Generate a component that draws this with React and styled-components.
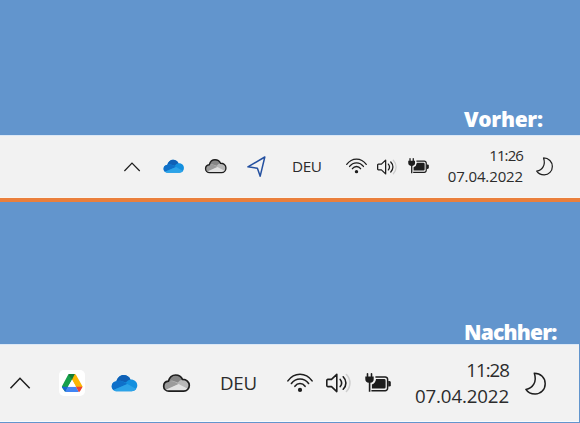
import React from 'react'
import styled, { createGlobalStyle } from 'styled-components'

const Palette = {
  blue: '#6295cd',
  bar: '#f2f2f2',
  orange: '#ea7f3c',
  ink: '#1d1d1d',
  text: '#2c2c2c',
}

const GlobalStyle = createGlobalStyle`
  body {
    margin: 0;
    background: ${Palette.blue};
    overflow: hidden;
  }
`
const Wrapper = styled.div`
  display: flex;
  flex-direction: column;
  width: 580px;
  height: 423px;
  background: ${Palette.blue};
`
const Backdrop = styled.div`
  box-sizing: border-box;
  display: flex;
  align-items: flex-end;
  height: ${props => props.$height}px;
  padding-left: 464px;
`
const Heading = styled.div`
  font-family: 'Open Sans', 'Noto Sans', sans-serif;
  font-size: 21px;
  font-weight: 800;
  line-height: 26px;
  margin-bottom: ${props => props.$bottom}px;
  letter-spacing: ${props => props.$spacing}px;
  color: #fff;
  white-space: nowrap;
`
const Taskbar = styled.div`
  box-sizing: border-box;
  display: flex;
  align-items: center;
  width: ${props => props.$large ? 579 : 580}px;
  height: ${props => props.$large ? 78 : 63}px;
  border-top: 1px solid #dce8f6;
  border-bottom: 1px solid ${props => props.$large ? '#f8fafd' : '#faf5ee'};
  background: ${Palette.bar};
`
const Divider = styled.div`
  height: 4px;
  background: ${Palette.orange};
`
const Item = styled.div`
  display: flex;
  flex-shrink: 0;
  width: ${props => props.$width}px;
  margin-left: ${props => props.$gap}px;
`
const Svg = styled.svg`
  display: block;
  width: 100%;
  overflow: visible;
`
const Language = styled.div`
  flex-shrink: 0;
  width: ${props => props.$large ? 37 : 30}px;
  margin-left: ${props => props.$gap}px;
  font-family: 'Open Sans', 'Noto Sans', sans-serif;
  font-size: ${props => props.$large ? 18.7 : 15.3}px;
  line-height: ${props => props.$large ? 26 : 21}px;
  letter-spacing: ${props => props.$large ? -0.2 : -0.4}px;
  color: ${Palette.text};
`
const Clock = styled.div`
  display: flex;
  flex-direction: column;
  align-items: flex-end;
  flex-shrink: 0;
  width: ${props => props.$large ? 95 : 76}px;
  margin-left: ${props => props.$gap}px;
  padding-bottom: ${props => props.$large ? 0 : 2}px;
  font-family: 'Open Sans', 'Noto Sans', sans-serif;
  font-size: ${props => props.$large ? 18.7 : 15}px;
  line-height: ${props => props.$large ? 26 : 21}px;
  color: ${Palette.text};
`
const Time = styled.div`
  letter-spacing: ${props => props.$large ? -1 : -0.9}px;
`
const DateText = styled.div`
  letter-spacing: -0.12px;
`

const ChevronIcon = () => (
  <Svg viewBox="0 0 20 12" fill="none" stroke={Palette.ink} strokeWidth="1.5">
    <path d="M.5 11.3 10 1.3 19.7 11.3" />
  </Svg>
)

const DriveIcon = () => (
  <Svg viewBox="0 0 26 26">
    <rect width="26" height="26" rx="5" fill="#fff" />
    <path d="M10.4 4h5.4l-2.8 6-3.9 6.4L6.2 22 3.1 17.4q-.4-.8 0-1.5L9 5q.5-1 1.4-1z" fill="#16a04b" />
    <path d="M10.4 4h5.2q1 0 1.5.9l6.2 11q.3.5.2 1H17l-4-7.1z" fill="#fbb604" />
    <path d="M10.4 4h5.4L13 9.8 9.4 4.4q.4-.4 1-.4z" fill="#137c35" />
    <path d="M9.1 16.7H17L19.8 22H7.4q-.8 0-1.2-.6z" fill="#4285f4" />
    <path d="M2.9 16.7h6.2L6.2 21.7 3.1 17.6z" fill="#1967d2" />
    <path d="M16.9 16.7h6.5q0 .5-.3 1l-1.9 3.4q-.5.9-1.4.9z" fill="#ea4335" />
    <path d="m13 9.8 3.9 6.9H9.1z" fill="#fff" />
  </Svg>
)

const cloudShape = 'M5.9 17.2C3 17.2.7 15 .7 12.2c0-2.7 2-4.7 4.7-5C6.4 3.6 9.2 1 12.6 1c3.2 0 5.7 1.6 6.9 4.4 3.9-.1 6.8 2.5 6.8 5.9 0 3.4-2.5 5.9-5.6 5.9z'

const OneDriveIcon = () => (
  <Svg viewBox="0 0 27 18">
    <path d={cloudShape} fill="#1490df" />
    <path d="M5.4 7.2C6.4 3.6 9.2 1 12.6 1c3.2 0 5.7 1.6 6.9 4.4-2 .3-3.4 1.5-4.6 3.2L9.4 6.8a7 7 0 0 0-4 .4z" fill="#0f60b6" />
    <path d="M5.4 7.2c2.4-.9 4.7-.6 6.7.5l4.2 2.3L2.4 16C1.3 15 .7 13.8.7 12.2c0-2.7 2-4.7 4.7-5z" fill="#0f70c9" />
    <path d="M2.4 15.9 16.4 10 25.2 15c-1 1.3-2.6 2.2-4.5 2.2H5.9c-1.4 0-2.6-.5-3.5-1.3z" fill="#2ca3e8" />
  </Svg>
)

const CloudIcon = () => (
  <Svg viewBox="0 0 27 18">
    <path d={cloudShape} fill="#b8b8b8" />
    <path d="M5.4 7.2C6.4 3.6 9.2 1 12.6 1c3.2 0 5.7 1.6 6.9 4.4-2 .3-3.4 1.5-4.6 3.2L9 6.6z" fill="#858585" />
    <path d="M5.4 7.2c3.3-.6 5.7.2 10.1 3L2.4 16C1.3 15 .7 13.8.7 12.2c0-2.7 2-4.7 4.7-5z" fill="#9b9b9b" />
    <path d="m2.4 15.9 13.2-5.8 9.6 4.9c-1 1.3-2.6 2.2-4.5 2.2H5.9z" fill="#e2e2e2" />
    <path d={cloudShape} fill="none" stroke={Palette.ink} strokeWidth="1.7" />
  </Svg>
)

const LocationIcon = () => (
  <Svg viewBox="0 0 19 21" fill="none" stroke="#2450a0" strokeWidth="1.5" strokeLinejoin="round">
    <path d="M17.8 1 .9 10.8l9.5 1.4 2.8 8z" />
  </Svg>
)

const WifiIcon = () => (
  <Svg viewBox="0 0 26 20" fill="none" stroke={Palette.ink} strokeWidth="1.6" strokeLinecap="round">
    <path d="M.9 7.9C7.3-.9 18.7-.9 25.1 7.9" />
    <path d="M4.4 10.5c4.5-6 12.7-6 17.2 0" />
    <path d="M7.9 13.3c2.7-3.7 7.5-3.7 10.2 0" />
    <circle cx="13" cy="16.9" r="2.1" fill={Palette.ink} stroke="none" />
  </Svg>
)

const VolumeIcon = () => (
  <Svg viewBox="0 0 25 20" fill="none" stroke={Palette.ink} strokeWidth="1.6" strokeLinecap="round" strokeLinejoin="round">
    <path d="M1.8 6.4h3.7l5.3-5v17.2l-5.3-5H1.8a1 1 0 0 1-1-1V7.4a1 1 0 0 1 1-1z" />
    <path d="M14.2 6.4c1.7 2.1 1.7 5.1 0 7.2" />
    <path d="M17.2 3.8c3.6 3.6 3.6 8.8 0 12.4" />
    <path d="M20.4 1.5c4.7 5 4.7 12 0 17" stroke="#cfcfcf" />
  </Svg>
)

const BatteryIcon = () => (
  <Svg viewBox="0 0 26 20">
    <path d="M10.4 3.9h9.8a2.4 2.4 0 0 1 2.4 2.4v9a2.4 2.4 0 0 1-2.4 2.4H6.4" fill="none" stroke={Palette.ink} strokeWidth="1.5" />
    <path d="M11 6h8.2q1.4 0 1.4 1.4v6.8q0 1.4-1.4 1.4H6.9v-4q3.6-1.4 4.1-5.6z" fill={Palette.ink} />
    <path d="M23.2 8h1q1.6 0 1.6 1.4v2.8q0 1.4-1.6 1.4h-1z" fill={Palette.ink} />
    <path d="M.3 3.5h8.4v2.7c0 2.1-1.4 3.3-3.3 3.6v9H3.8v-9C1.8 9.5.3 8.3.3 6.2z" fill={Palette.ink} />
    <path d="M2.5.7v3M6.5.7v3" stroke={Palette.ink} strokeWidth="1.6" strokeLinecap="round" />
  </Svg>
)

const MoonIcon = () => (
  <Svg viewBox="0 0 21 23" fill="none" stroke={Palette.ink} strokeWidth="1.5" strokeLinejoin="round">
    <path d="M9.3 1.2C15.8 1.2 20.2 6 20.2 11.7 20.2 17.6 15.8 22 10.2 22 6.3 22 2.8 20.5.9 17.4c6.8-1 11.4-7.500 8.400-16.200z" />
  </Svg>
)

const App = () => (
  <Wrapper>
    <GlobalStyle />
    <Backdrop $height={135}>
      <Heading $bottom={3} $spacing={-0.3}>Vorher:</Heading>
    </Backdrop>
    <Taskbar>
      <Item $gap={124} $width={16}><ChevronIcon /></Item>
      <Item $gap={23} $width={21.5}><OneDriveIcon /></Item>
      <Item $gap={20} $width={21.5}><CloudIcon /></Item>
      <Item $gap={21} $width={19}><LocationIcon /></Item>
      <Language $gap={26}>DEU</Language>
      <Item $gap={24} $width={21}><WifiIcon /></Item>
      <Item $gap={10} $width={20}><VolumeIcon /></Item>
      <Item $gap={11} $width={21}><BatteryIcon /></Item>
      <Clock $gap={18}>
        <Time>11:26</Time>
        <DateText>07.04.2022</DateText>
      </Clock>
      <Item $gap={13} $width={17}><MoonIcon /></Item>
    </Taskbar>
    <Divider />
    <Backdrop $height={142}>
      <Heading $bottom={-1} $spacing={-0.8}>Nachher:</Heading>
    </Backdrop>
    <Taskbar $large>
      <Item $gap={10} $width={20}><ChevronIcon /></Item>
      <Item $gap={29} $width={26}><DriveIcon /></Item>
      <Item $gap={26} $width={27}><OneDriveIcon /></Item>
      <Item $gap={25} $width={27}><CloudIcon /></Item>
      <Language $large $gap={30}>DEU</Language>
      <Item $gap={30} $width={26}><WifiIcon /></Item>
      <Item $gap={13} $width={25}><VolumeIcon /></Item>
      <Item $gap={14} $width={26}><BatteryIcon /></Item>
      <Clock $large $gap={23}>
        <Time $large>11:28</Time>
        <DateText>07.04.2022</DateText>
      </Clock>
      <Item $gap={16} $width={21}><MoonIcon /></Item>
    </Taskbar>
  </Wrapper>
)

export default App
